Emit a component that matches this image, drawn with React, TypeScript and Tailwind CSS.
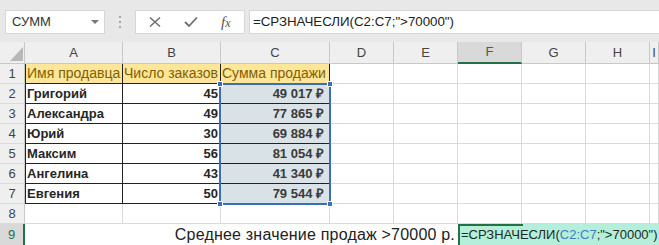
const cols = "grid grid-cols-[25px_98px_98px_109px_64px_64px_64px_64px_64px_1fr]";

const letters = ["A", "B", "C", "D", "E", "F", "G", "H", "I"];

const rows = [
  ["Григорий", "45", "49 017 ₽"],
  ["Александра", "49", "77 865 ₽"],
  ["Юрий", "30", "69 884 ₽"],
  ["Максим", "56", "81 054 ₽"],
  ["Ангелина", "43", "41 340 ₽"],
  ["Евгения", "50", "79 544 ₽"],
];

function RowHead({ n }: { n: number }) {
  return (
    <div className="flex h-5 items-center justify-center border-b border-r border-b-[#dadada] border-r-[#c8c8c8] bg-[#efefef] text-[13px] text-[#444]">
      {n}
    </div>
  );
}

function Empty({ count }: { count: number }) {
  return (
    <>
      {Array.from({ length: count }).map((_, i) => (
        <div key={i} className="h-5 border-b border-r border-[#dadada] bg-white" />
      ))}
    </>
  );
}

export default function App() {
  return (
    <div className="relative h-[245px] w-[659px] overflow-hidden bg-white font-['Liberation_Sans',Arial,sans-serif]">
      {/* toolbar */}
      <div className="flex h-[42px] items-start bg-[#e8e8e8] pl-[5px] pt-[10px]">
        <div className="flex h-6 w-[100px] items-center justify-between border border-[#d6d6d6] bg-white pl-[6px] pr-[5px] text-[13px] text-[#333]">
          <span>СУММ</span>
          <span className="h-0 w-0 border-x-[4px] border-t-[4px] border-x-transparent border-t-[#777]" />
        </div>
        <div className="flex h-6 w-[30px] flex-col items-center justify-center gap-[3px]">
          <span className="h-[2px] w-[2px] bg-[#a8a8a8]" />
          <span className="h-[2px] w-[2px] bg-[#a8a8a8]" />
          <span className="h-[2px] w-[2px] bg-[#a8a8a8]" />
        </div>
        <div className="flex h-6 w-[110px] items-center border border-[#d6d6d6] bg-white pl-[13px]">
          <svg width="12" height="12" viewBox="0 0 12 12" className="mt-[-1px]">
            <path d="M1 1.5L11 10.5M11 1.5L1 10.5" stroke="#6e6e6e" strokeWidth="1.6" fill="none" />
          </svg>
          <svg width="14" height="12" viewBox="0 0 14 12" className="ml-[23px]">
            <path d="M1 6L5 10L13 1.5" stroke="#6e6e6e" strokeWidth="1.8" fill="none" />
          </svg>
          <span className="ml-[23px] font-['Liberation_Serif',serif] text-[15px] italic leading-none text-[#555]">
            f<span className="text-[12px]">x</span>
          </span>
        </div>
        <div className="ml-1 flex h-6 flex-1 items-center border border-r-0 border-[#d6d6d6] bg-white pl-[3px] text-[13.3px] text-[#222]">
          =СРЗНАЧЕСЛИ(C2:C7;"&gt;70000")
        </div>
      </div>

      {/* sheet */}
      <div className={`relative ${cols}`}>
        <div className="relative h-[22px] border-b border-r border-[#c8c8c8] bg-[#efefef]">
          <svg width="13" height="14" viewBox="0 0 13 14" className="absolute bottom-[2px] left-[10px]">
            <polygon points="0,14 13,14 13,0" fill="#b8b8b8" />
          </svg>
        </div>
        {letters.map((l) =>
          l === "F" ? (
            <div
              key={l}
              className="flex h-[22px] items-center justify-center border-b-2 border-r border-b-[#217346] border-r-[#c8c8c8] bg-[#d9d9d9] text-[13px] text-[#217346]"
            >
              {l}
            </div>
          ) : (
            <div
              key={l}
              className="flex h-[22px] items-center justify-center border-b border-r border-[#c8c8c8] bg-[#efefef] text-[13px] text-[#444]"
            >
              {l}
            </div>
          )
        )}

        <RowHead n={1} />
        <div className="flex h-5 items-center border-b border-l border-r border-[#222] bg-[#ffe699] pl-[1px] text-[14px] text-[#7f6000]">
          Имя продавца
        </div>
        <div className="flex h-5 items-center border-b border-r border-[#222] bg-[#ffe699] pl-[1px] text-[14px] whitespace-nowrap text-[#7f6000]">
          Число заказов
        </div>
        <div className="flex h-5 items-center border-b border-r border-[#222] bg-[#ffe699] pl-[1px] text-[14px] whitespace-nowrap text-[#7f6000]">
          Сумма продажи
        </div>
        <Empty count={6} />

        {rows.map((r, i) => (
          <div key={r[0]} className="contents">
            <RowHead n={i + 2} />
            <div className="flex h-5 items-center border-b border-l border-r border-[#222] bg-white pl-[1px] text-[13px] font-bold text-[#262626]">
              {r[0]}
            </div>
            <div className="flex h-5 items-center justify-end border-b border-r border-[#222] bg-white pr-[2px] text-[13px] font-bold text-[#262626]">
              {r[1]}
            </div>
            <div className="flex h-5 items-center justify-end border-b border-r border-[#222] bg-[#d9e2e6] pr-[5px] text-[13px] font-bold text-[#3a3a3a]">
              {r[2]}
            </div>
            <Empty count={6} />
          </div>
        ))}

        <RowHead n={8} />
        <Empty count={9} />

        <div className="flex h-[21px] items-center justify-center border-r-2 border-[#217346] bg-[#d9d9d9] text-[13px] text-[#217346]">
          9
        </div>
        <div className="col-span-5 flex h-[21px] items-center justify-end bg-white pr-[3px] text-[16px] tracking-[0.2px] text-[#222]">
          Среднее значение продаж &gt;70000 р.
        </div>
        <div className="relative col-span-4 flex h-[21px] items-center bg-[#b6eedc] pl-[3px] text-[13px] whitespace-nowrap text-[#1f2a22]">
          <span className="absolute left-0 top-0 h-full w-[65px] border-l-2 border-t-2 border-[#217346]" />
          =СРЗНАЧЕСЛИ(<span className="text-[#3d7fc4]">C2:C7</span>;"&gt;70000")
        </div>

        {/* referenced range C2:C7 */}
        <div className="pointer-events-none absolute left-[219px] top-[41px] h-[122px] w-[112px] border-2 border-[#3f6db3]">
          <span className="absolute -left-[4px] -top-[4px] h-[6px] w-[6px] border border-white bg-[#3f6db3]" />
          <span className="absolute -right-[4px] -top-[4px] h-[6px] w-[6px] border border-white bg-[#3f6db3]" />
          <span className="absolute -bottom-[4px] -left-[4px] h-[6px] w-[6px] border border-white bg-[#3f6db3]" />
          <span className="absolute -bottom-[4px] -right-[4px] h-[6px] w-[6px] border border-white bg-[#3f6db3]" />
        </div>
      </div>
    </div>
  );
}
